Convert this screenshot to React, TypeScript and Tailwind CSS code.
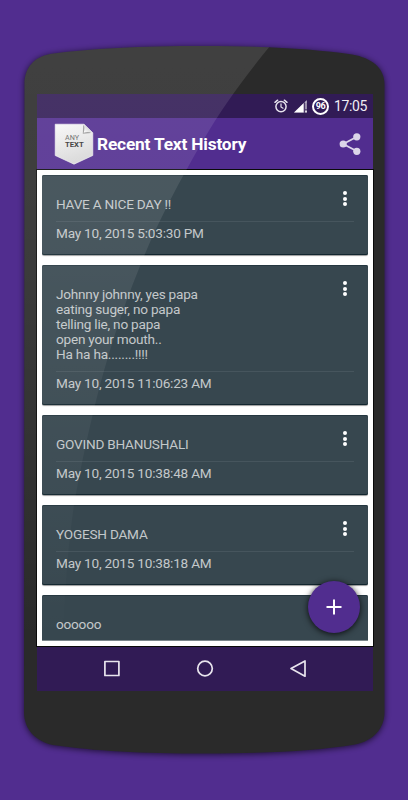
import React from 'react';

interface HistoryEntry {
  lines: string[];
  date: string;
}

const entries: HistoryEntry[] = [
  { lines: ['HAVE A NICE DAY !!'], date: 'May 10, 2015 5:03:30 PM' },
  {
    lines: [
      'Johnny johnny, yes papa',
      'eating suger, no papa',
      'telling lie, no papa',
      'open your mouth..',
      'Ha ha ha........!!!!',
    ],
    date: 'May 10, 2015 11:06:23 AM',
  },
  { lines: ['GOVIND BHANUSHALI'], date: 'May 10, 2015 10:38:48 AM' },
  { lines: ['YOGESH DAMA'], date: 'May 10, 2015 10:38:18 AM' },
];

const BODY_PATH =
  'M24.5 84 C24.5 68 34 57 50 54 C90 48.5 140 46 204 46 C265 46 315 49 352 54.500 C372 58 384.500 68 384.500 84 L384.500 712 C384.500 729 373 741 355 744.500 C315 751 265 753.500 204 753.500 C143 753.500 94 751 53 745 C35 741 24 729 24 712 Z';

const PhoneBody = () => (
  <svg className="absolute inset-0" width="408" height="800" viewBox="0 0 408 800" aria-hidden="true">
    <defs>
      <filter id="body-shadow" x="-10%" y="-10%" width="120%" height="120%">
        <feGaussianBlur stdDeviation="3" />
      </filter>
    </defs>
    <path d={BODY_PATH} fill="#000" opacity="0.65" transform="translate(0 1)" filter="url(#body-shadow)" />
    <path d={BODY_PATH} fill="#2a2a2a" />
  </svg>
);

// Light reflection that sweeps across the glass and fades towards the bottom
const Gloss = () => (
  <svg className="absolute inset-0 pointer-events-none" width="408" height="800" viewBox="0 0 408 800" aria-hidden="true">
    <defs>
      <clipPath id="body-clip">
        <path d={BODY_PATH} />
      </clipPath>
      <linearGradient id="gloss-fade" gradientUnits="userSpaceOnUse" x1="0" y1="46" x2="0" y2="640">
        <stop offset="0" stopColor="#fff" stopOpacity="0.105" />
        <stop offset="0.3" stopColor="#fff" stopOpacity="0.09" />
        <stop offset="1" stopColor="#fff" stopOpacity="0" />
      </linearGradient>
    </defs>
    <path
      d="M20 40 H275 C245 76 222 108 204 139 C177 185 156 226 140 266 C120 315 106 360 95 405 C86 442 79 475 74 505 C68 545 65 590 62 650 H20 Z"
      fill="url(#gloss-fade)"
      clipPath="url(#body-clip)"
    />
  </svg>
);

const AlarmIcon = () => (
  <svg width="14" height="14" viewBox="0 0 14 14" fill="none" stroke="#e8e4ee" strokeLinecap="round">
    <circle cx="7" cy="7.600" r="5.100" strokeWidth="1.500" />
    <path d="M7 4.900 V7.900 L9 9.200" strokeWidth="1.200" />
    <path d="M1 3.300 L3.600 1.200 M13 3.300 L10.400 1.200" strokeWidth="1.500" />
  </svg>
);

const SignalIcon = () => (
  <svg width="14" height="13" viewBox="0 0 14 13">
    <path d="M0 12.500 L12.800 0 V12.500 Z" fill="#fff" opacity="0.35" />
    <path d="M0 12.500 L9.800 3 V12.500 Z" fill="#fff" />
    <path d="M9.800 3 H13 V12.500 H9.800 Z" fill="#4b3869" />
    <path d="M11.200 1.800 L12.800 0.200 V9.200 H11.200 Z" fill="#fff" opacity="0.55" />
    <path d="M11.200 10.600 H12.800 V12.500 H11.200 Z" fill="#fff" />
  </svg>
);

const Battery = () => (
  <div className="flex h-[17px] w-[17px] items-center justify-center rounded-full border-2 border-white text-[9px] font-bold leading-none tracking-[-0.5px] text-white">
    96
  </div>
);

const StatusBar = () => (
  <div className="flex h-6 shrink-0 items-center bg-[#311b55] pl-[237px]">
    <AlarmIcon />
    <div className="ml-[6px]">
      <SignalIcon />
    </div>
    <div className="ml-[4px]">
      <Battery />
    </div>
    <span className="ml-[5px] text-[14px] leading-none tracking-[-0.4px] text-[#f0edf4]">17:05</span>
  </div>
);

const AppLogo = () => (
  <svg width="40" height="42" viewBox="0 0 40 42">
    <defs>
      <linearGradient id="paper" x1="0" y1="0" x2="0.3" y2="1">
        <stop offset="0" stopColor="#f8f8f8" />
        <stop offset="1" stopColor="#d8d8d8" />
      </linearGradient>
      <linearGradient id="fold" x1="0" y1="1" x2="1" y2="0">
        <stop offset="0" stopColor="#ffffff" />
        <stop offset="1" stopColor="#b5b5b5" />
      </linearGradient>
    </defs>
    <path d="M1.200 1.200 H30 L38.800 9.800 V32.500 L20 41.200 L1.200 32.500 Z" fill="url(#paper)" stroke="#fafafa" strokeWidth="0.600" />
    <path d="M29.200 2 L28.800 10.800 L37 10 Z" fill="#555" opacity="0.55" />
    <path d="M30 1.200 C30.600 4 30.500 7 29.700 9.700 C32.500 8.800 35.500 9 38.800 9.800 Z" fill="url(#fold)" />
    <text x="11" y="17.300" fontSize="7.200" fill="#666">ANY</text>
    <text x="11" y="23.800" fontSize="8" fill="#333" textLength="18.700" lengthAdjust="spacingAndGlyphs" fontWeight="700">TEXT</text>
  </svg>
);

const ShareIcon = () => (
  <svg width="22" height="22" viewBox="0 0 22 22" fill="#dcd5e9">
    <path d="M18 3.700 L4.200 11 L18 18.300" fill="none" stroke="#dcd5e9" strokeWidth="1.800" />
    <circle cx="17.800" cy="3.800" r="3.600" />
    <circle cx="4.200" cy="11" r="3.600" />
    <circle cx="17.800" cy="18.300" r="3.600" />
  </svg>
);

const AppBar = () => (
  <div className="flex h-[52px] shrink-0 items-center border-b border-[#2a0878] bg-[#512d8f] pl-[17px]">
    <AppLogo />
    <h1 className="ml-[3px] mt-[3px] w-[242px] whitespace-nowrap text-[17.300px] font-bold leading-none tracking-[-0.17px] text-white">
      Recent Text History
    </h1>
    <ShareIcon />
  </div>
);

const MenuDots = () => (
  <div className="absolute right-[21px] top-[16px] flex flex-col gap-[1.6px]">
    <span className="h-1 w-1 rounded-full bg-white" />
    <span className="h-1 w-1 rounded-full bg-white" />
    <span className="h-1 w-1 rounded-full bg-white" />
  </div>
);

const HistoryCard: React.FC<{ entry: HistoryEntry }> = ({ entry }) => (
  <div className="relative shrink-0 rounded-[2px] bg-[#37474f] px-[14px] pb-[14px] pt-[22px] shadow-[inset_0_-1px_0_#12262f,inset_0_1px_0_#253740,0_1px_1px_rgba(0,0,0,0.4)]">
    {entry.lines.map((line) => (
      <p key={line}>{line}</p>
    ))}
    <div className="mt-[9px] border-t border-[#46555d] pt-1">{entry.date}</div>
    <MenuDots />
  </div>
);

const NavBar = () => (
  <div className="flex h-[45px] shrink-0 items-center bg-[#311b55] pl-[67px]">
    <svg width="210" height="18" viewBox="0 0 210 18" fill="none" stroke="#e9e5ee" strokeWidth="1.700" strokeLinejoin="round">
      <rect x="0.900" y="1.500" width="14" height="14" />
      <circle cx="101" cy="8.500" r="7.300" />
      <path d="M201 1 V16.200 L187 8.600 Z" />
    </svg>
  </div>
);

export default function App() {
  return (
    <main className="relative h-[800px] w-[408px] overflow-hidden bg-[#512d8f] pl-[37px] pt-[94px] font-['Roboto',sans-serif]">
      <PhoneBody />
      <div className="relative flex h-[597px] w-[336px] flex-col">
        <StatusBar />
        <AppBar />
        <div className="relative min-h-0 flex-1 bg-white px-[5px] pb-[5px] pt-[5px] shadow-[0_0_0_1px_#0a0a0a]">
          <div className="flex h-full flex-col gap-[10px] overflow-hidden text-[13.600px] leading-[15px] tracking-[-0.22px] text-[#c3c8ca]">
            {entries.map((entry) => (
              <HistoryCard key={entry.date} entry={entry} />
            ))}
            <div className="min-h-0 flex-1 rounded-t-[2px] border-b border-[#7b868b] bg-[#37474f] px-[14px] pt-[22px] shadow-[inset_0_1px_0_#253740]">
              oooooo
            </div>
          </div>
          <button
            aria-label="Add text"
            className="absolute bottom-[13px] right-[13px] flex h-[52px] w-[52px] items-center justify-center rounded-full bg-[#512d8f] shadow-[0_1px_6px_rgba(0,0,0,0.85)]"
          >
            <svg width="16" height="16" viewBox="0 0 16 16" stroke="#fff" strokeWidth="2">
              <path d="M8 0.500 V15.500 M0.500 8 H15.500" />
            </svg>
          </button>
        </div>
        <NavBar />
      </div>
      <Gloss />
    </main>
  );
}
